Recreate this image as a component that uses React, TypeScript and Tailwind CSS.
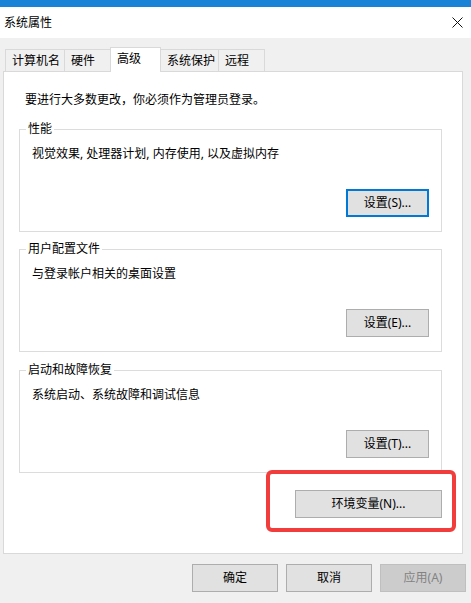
import type { ReactNode } from 'react';

const FONT = "font-['Noto_Sans','Noto_Sans_CJK_SC',sans-serif]";

function WinButton({
  children,
  focused,
  disabled,
  className = '',
}: {
  children: ReactNode;
  focused?: boolean;
  disabled?: boolean;
  className?: string;
}) {
  const look = disabled
    ? 'bg-[#cccccc] border border-[#bfbfbf] text-[#838383]'
    : focused
      ? 'bg-[#e1e1e1] border-2 border-[#0078d7] text-black'
      : 'bg-[#e1e1e1] border border-[#adadad] text-black';
  return (
    <button className={`h-[28px] flex items-center justify-center text-[12px] leading-none ${look} ${className}`}>
      {children}
    </button>
  );
}

function Group({
  title,
  text,
  button,
  focused,
  className = '',
}: {
  title: string;
  text: string;
  button: string;
  focused?: boolean;
  className?: string;
}) {
  return (
    <fieldset className={`ml-[15px] mr-[20px] border border-[#dcdcdc] ${className}`}>
      <legend className="ml-[6px] px-[2px] text-[12px] leading-[16px]">{title}</legend>
      <div className="px-[12px] pt-[9px] pb-[14px]">
        <p className="text-[12px] leading-[16px] whitespace-pre">{text}</p>
        <div className="mt-[27px] flex justify-end">
          <WinButton focused={focused} className="w-[83px]">
            {button}
          </WinButton>
        </div>
      </div>
    </fieldset>
  );
}

const tabs = [
  { label: '计算机名', w: 'w-[60px]' },
  { label: '硬件', w: 'w-[47px]' },
  { label: '高级', w: 'w-[51px]', active: true },
  { label: '系统保护', w: 'w-[59px]' },
  { label: '远程', w: 'w-[47px]' },
];

export default function App() {
  return (
    <div className={`w-[471px] h-[603px] overflow-hidden bg-[#f0f0f0] text-black ${FONT}`}>
      <div className="h-[7px] bg-[#1883d7]" />
      <div className="h-[31px] bg-white flex items-center justify-between pl-[4px] pr-[8px]">
        <span className="text-[12px] leading-none">系统属性</span>
        <svg width="11" height="11" viewBox="0 0 11 11">
          <path d="M0.5 0.5 L10.5 10.5 M10.5 0.5 L0.5 10.5" stroke="#111" strokeWidth="1" />
        </svg>
      </div>

      <div className="px-[3px] pt-[9px]">
        <div className="flex items-end ml-[2px] h-[24px]">
          {tabs.map((t) =>
            t.active ? (
              <div
                key={t.label}
                className={`${t.w} -ml-px h-[25px] -mb-px relative z-10 bg-white border border-b-0 border-[#d9d9d9] pl-[6px] pt-[3px] text-[12px] leading-[16px]`}
              >
                {t.label}
              </div>
            ) : (
              <div
                key={t.label}
                className={`${t.w} -ml-px first:ml-0 h-[22px] bg-[#f0f0f0] border border-b-0 border-[#d9d9d9] pl-[6px] pt-[3px] text-[12px] leading-[16px]`}
              >
                {t.label}
              </div>
            ),
          )}
        </div>

        <div className="w-[460px] bg-white border border-[#d9d9d9] pt-[20px] pb-[35px]">
          <p className="ml-[21px] text-[12px] leading-[16px]">{'要进行大多数更改\uFF0C你必须作为管理员登录\u3002'}</p>

          <Group
            className="mt-[13px]"
            title="性能"
            text="视觉效果, 处理器计划, 内存使用, 以及虚拟内存"
            button="设置(S)..."
            focused
          />
          <Group
            className="mt-[9px]"
            title="用户配置文件"
            text="与登录帐户相关的桌面设置"
            button="设置(E)..."
          />
          <Group
            className="mt-[10px]"
            title="启动和故障恢复"
            text="系统启动、系统故障和调试信息"
            button="设置(T)..."
          />

          <div className="mt-[17px] mr-[20px] flex justify-end">
            <div className="relative">
              <WinButton className="w-[147px]">环境变量(N)...</WinButton>
              <span className="pointer-events-none absolute -left-[29px] -right-[14px] -top-[20px] -bottom-[14px] border-[4px] border-[#f23d3d] rounded-[6px]" />
            </div>
          </div>
        </div>

        <div className="mt-[10px] pr-[2px] flex justify-end gap-[8px]">
          <WinButton className="w-[86px]">确定</WinButton>
          <WinButton className="w-[86px]">取消</WinButton>
          <WinButton className="w-[86px]" disabled>
            应用(A)
          </WinButton>
        </div>
      </div>
    </div>
  );
}
